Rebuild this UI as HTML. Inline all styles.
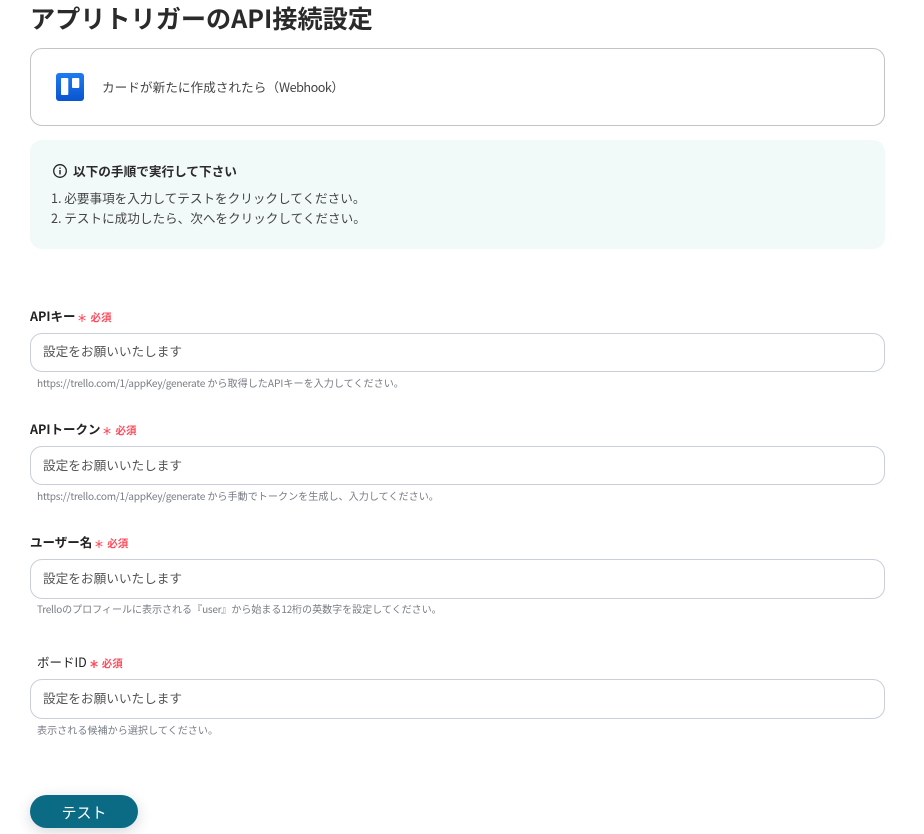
<!DOCTYPE html>
<html lang="ja">
<head>
<meta charset="utf-8">
<style>
*{box-sizing:border-box}
html,body{margin:0;padding:0;width:924px;height:834px;overflow:hidden;background:#fff}
body{font-family:"Noto Sans CJK JP","Liberation Sans",sans-serif;color:#283141;position:relative}
.a{position:absolute;white-space:nowrap}
.title{left:30px;top:0;font-size:25.15px;line-height:36px;font-weight:700;color:#2a2a2a}
.card{left:30px;top:48px;width:855px;height:78px;border:1px solid #c4c4c8;border-radius:12px;background:#fff}
.info{left:30px;top:140px;width:855px;height:109px;border-radius:12px;background:#f2faf9}
.label{font-size:12.5px;line-height:18px;font-weight:700;color:#222;left:30px}
.req{font-size:10.5px;font-weight:700;color:#ff4b5c}
.star{display:inline-block;width:8px;margin:0 4px 0 3px;vertical-align:-1px}
.input{left:30px;width:855px;height:39px;border:1px solid #c9ced8;border-radius:12px;background:#fff;font-size:12.65px;line-height:33px;padding-left:12px;color:#555}
.help{left:37px;font-size:10.1px;line-height:14px;color:#777c85}
.l{letter-spacing:-.25px}
.btn{left:30px;top:795px;width:108px;height:33px;border-radius:17px;background:#0b6a84;color:#fff;text-align:center;font-size:15px;line-height:31px;padding-top:2px;box-shadow:0 4px 14px rgba(40,60,80,.2)}
</style>
</head>
<body>
<svg width="0" height="0" style="position:absolute"><defs><linearGradient id="g" x1="0" y1="0" x2="0" y2="1"><stop offset="0" stop-color="#1f7cf0"/><stop offset="1" stop-color="#0a55cf"/></linearGradient></defs></svg>
<div class="a title">アプリトリガーのAPI接続設定</div>

<div class="a card"></div>
<svg class="a" style="left:56px;top:73px" width="28" height="28" viewBox="0 0 28 28">
<rect width="28" height="28" rx="3" fill="url(#g)"/>
<rect x="5" y="5" width="7.3" height="17" rx="1" fill="#fff"/>
<rect x="16" y="5" width="7.3" height="10" rx="1" fill="#fff"/>
</svg>
<div class="a" style="left:102px;top:78px;font-size:12.65px;line-height:18px;color:#444">カードが新たに作成されたら（<span style="letter-spacing:-.5px">Webhook</span>）</div>

<div class="a info"></div>
<svg class="a" style="left:52px;top:163px" width="16" height="16" viewBox="0 0 16 16">
<circle cx="8" cy="8" r="6.3" fill="none" stroke="#222" stroke-width="1.3"/>
<rect x="7.3" y="7" width="1.4" height="4.4" fill="#222"/>
<rect x="7.3" y="4.5" width="1.4" height="1.4" fill="#222"/>
</svg>
<div class="a" style="left:73px;top:162px;font-size:12.65px;line-height:18px;font-weight:700;color:#2a2a2a">以下の手順で実行して下さい</div>
<div class="a" style="left:51px;top:188px;font-size:12.6px;line-height:20px;color:#444">1. 必要事項を入力してテストをクリックしてください。<br>2. テストに成功したら、次へをクリックしてください。</div>

<div class="a label" style="top:307px">APIキー<svg class="star" viewBox="0 0 8 8" height="8"><path d="M4 0V8M.6 2 7.4 6M7.4 2 .6 6" stroke="#ff4b5c" stroke-width="1" fill="none"/></svg><span class="req">必須</span></div>
<div class="a input" style="top:333px">設定をお願いいたします</div>
<div class="a help" style="top:376px"><span class="l">https://trello.com/1/appKey/generate</span> から取得したAPIキーを入力してください。</div>

<div class="a label" style="top:420px">APIトークン<svg class="star" viewBox="0 0 8 8" height="8"><path d="M4 0V8M.6 2 7.4 6M7.4 2 .6 6" stroke="#ff4b5c" stroke-width="1" fill="none"/></svg><span class="req">必須</span></div>
<div class="a input" style="top:446px;padding-top:1px">設定をお願いいたします</div>
<div class="a help" style="top:489px"><span class="l">https://trello.com/1/appKey/generate</span> から手動でトークンを生成し、入力してください。</div>

<div class="a label" style="top:533px">ユーザー名<svg class="star" viewBox="0 0 8 8" height="8"><path d="M4 0V8M.6 2 7.4 6M7.4 2 .6 6" stroke="#ff4b5c" stroke-width="1" fill="none"/></svg><span class="req">必須</span></div>
<div class="a input" style="top:559px;height:40px;padding-top:1px">設定をお願いいたします</div>
<div class="a help" style="top:602px;font-size:10.03px"><span class="l">Trello</span>のプロフィールに表示される『<span class="l">user</span>』から始まる<span class="l">12</span>桁の英数字を設定してください。</div>

<div class="a label" style="top:653px;left:37px;font-weight:400">ボードID<svg class="star" viewBox="0 0 8 8" height="8"><path d="M4 0V8M.6 2 7.4 6M7.4 2 .6 6" stroke="#ff4b5c" stroke-width="1.3" fill="none"/></svg><span class="req">必須</span></div>
<div class="a input" style="top:679px;height:40px;padding-top:1px">設定をお願いいたします</div>
<div class="a help" style="top:723px">表示される候補から選択してください。</div>

<div class="a btn">テスト</div>
</body>
</html>
